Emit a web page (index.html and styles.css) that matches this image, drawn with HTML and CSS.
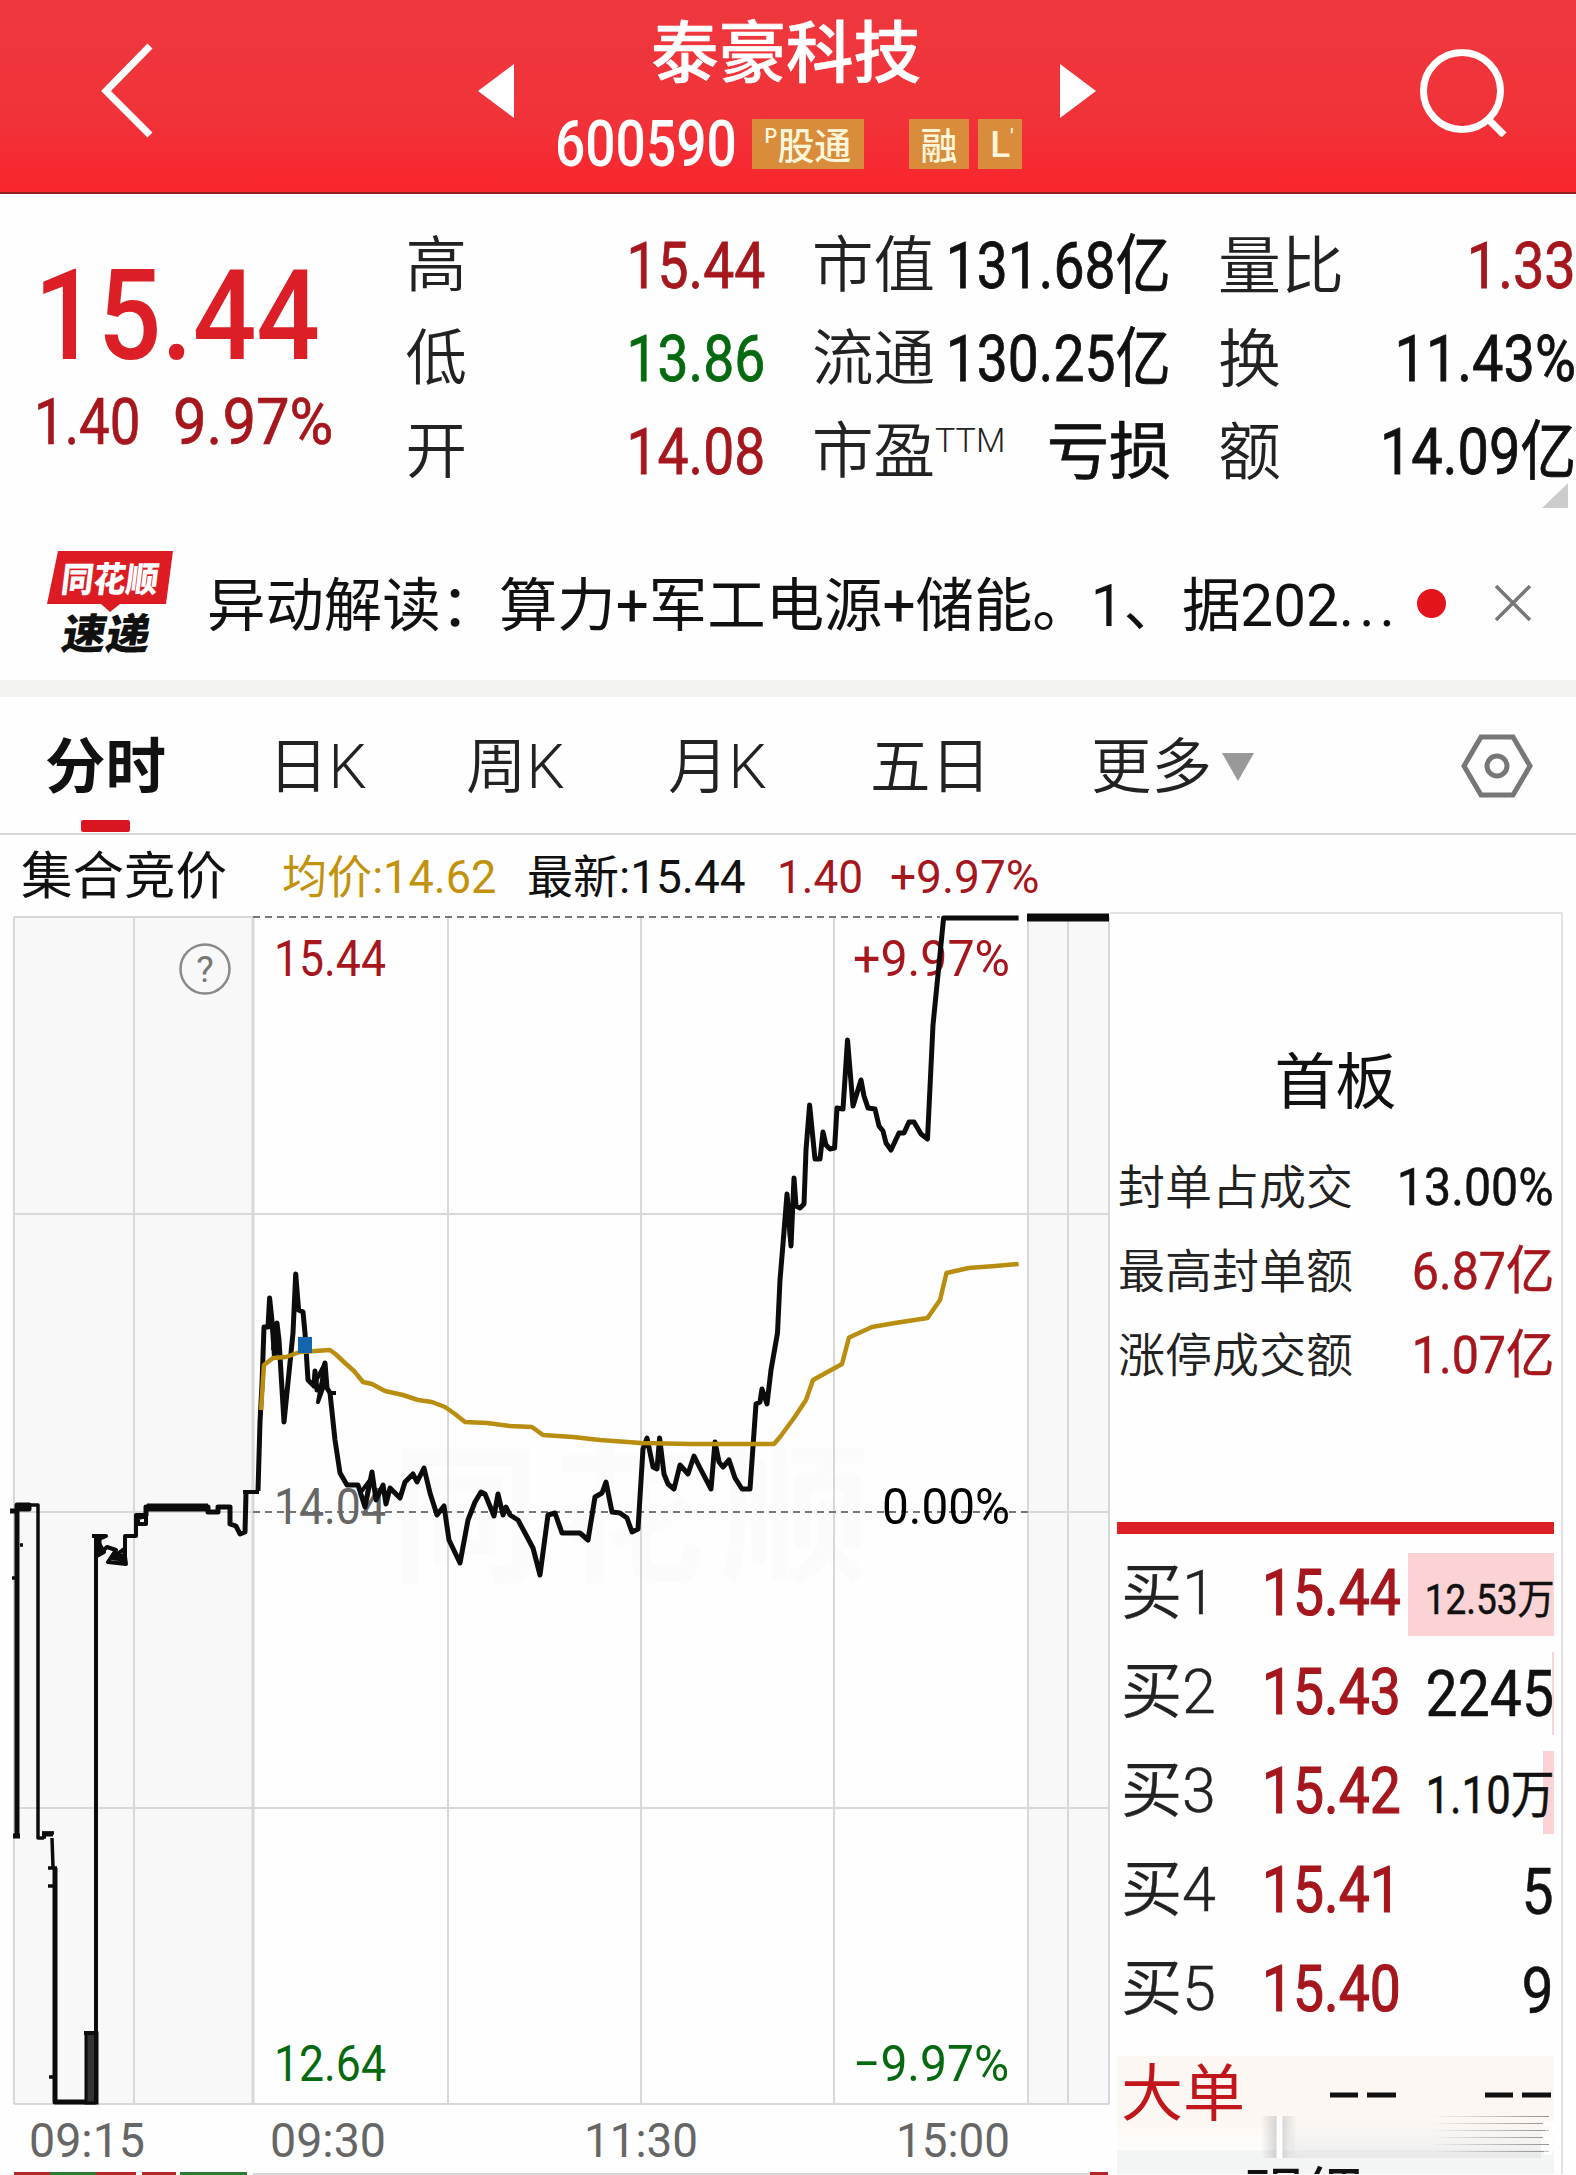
FILE: index.html
```html
<!DOCTYPE html>
<html lang="zh-CN">
<head>
    <meta charset="UTF-8">
    <meta name="viewport" content="width=device-width, initial-scale=1.0">
    <title>泰豪科技 600590</title>
    <link rel="stylesheet" href="styles.css">
</head>
<body>
    <header>
        <svg class="back" viewBox="0 0 60 100"><path d="M54 5 L10 50 L54 94"/></svg>
        <svg class="arrow prev" viewBox="0 0 37 54"><path d="M0 27 L36 0 V54 Z"/></svg>
        <div class="stock">
            <h1>泰豪科技</h1>
            <div class="code">
                <span class="number">600590</span>
                <span class="tag connect"><sup>P</sup>股通</span>
                <span class="tag margin">融</span>
                <span class="tag level">L<sup>'</sup></span>
            </div>
        </div>
        <svg class="arrow next" viewBox="0 0 37 54"><path d="M37 27 L1 0 V54 Z"/></svg>
        <svg class="search" viewBox="0 0 92 92"><circle cx="46" cy="46" r="38.5"/><path d="M72 74 L88 90"/></svg>
    </header>

    <section class="quote">
        <div class="price">
            <strong>15.44</strong>
            <p><span class="diff">1.40</span><span class="percent">9.97%</span></p>
        </div>
        <dl class="col-a">
            <div><dt>高</dt><dd class="up">15.44</dd></div>
            <div><dt>低</dt><dd class="down">13.86</dd></div>
            <div><dt>开</dt><dd class="up">14.08</dd></div>
        </dl>
        <dl class="col-b">
            <div><dt>市值</dt><dd>131.68亿</dd></div>
            <div><dt>流通</dt><dd>130.25亿</dd></div>
            <div><dt>市盈<sup>TTM</sup></dt><dd class="word">亏损</dd></div>
        </dl>
        <dl class="col-c">
            <div><dt>量比</dt><dd class="up">1.33</dd></div>
            <div><dt>换</dt><dd>11.43%</dd></div>
            <div><dt>额</dt><dd>14.09亿</dd></div>
        </dl>
        <svg class="corner" viewBox="0 0 26 25"><path d="M26 0 V25 H0 Z"/></svg>
    </section>

    <section class="news">
        <svg class="logo" viewBox="45 548 130 110">
            <path d="M58 551 H173 L166 604 H120 L110 612 L101 604 H47 Z"/>
            <text class="logo-top" transform="translate(60 592) skewX(-7)" textLength="97" lengthAdjust="spacingAndGlyphs">同花顺</text>
            <text class="logo-bottom" transform="translate(60 649) skewX(-10)" textLength="88" lengthAdjust="spacingAndGlyphs">速递</text>
        </svg>
        <p>异动解读：算力+军工电源+储能。1、据202<span>...</span></p>
        <i class="dot"></i>
        <svg class="close" viewBox="0 0 40 40"><path d="M3 3 L37 37 M37 3 L3 37"/></svg>
    </section>

    <nav>
        <a class="active">分时</a>
        <a>日K</a>
        <a>周K</a>
        <a>月K</a>
        <a>五日</a>
        <a class="more">更多<svg viewBox="0 0 32 28"><path d="M0 0 H32 L16 28 Z"/></svg></a>
        <svg class="settings" viewBox="0 0 76 68"><path d="M22 5 H54 L71 34 L54 63 H22 L5 34 Z"/><circle cx="38" cy="34" r="10"/></svg>
    </nav>

    <main>
        <div class="chart">
            <div class="info">
                <span class="auction">集合竞价</span>
                <span class="avg">均价:14.62</span>
                <span class="last">最新:15.44</span>
                <span class="up">1.40</span>
                <span class="up">+9.97%</span>
            </div>
            <svg class="plot" viewBox="0 905 1110 1270">
                <rect class="shade" x="14" y="917" width="239" height="1187"/>
                <rect class="shade" x="1028" y="917" width="81" height="1187"/>
                <text class="watermark" x="390" y="1570" textLength="480">同花顺</text>

                <path class="grid" d="M14 917 V2104 M134 917 V2104 M448 917 V2104 M641 917 V2104 M834 917 V2104 M1028 917 V2104 M1068 917 V2104 M1109 917 V2104"/>
                <path class="grid" d="M14 917 H253 M14 1214 H1109 M14 1512 H253 M1028 1512 H1109 M14 1808 H1109 M14 2104 H1109"/>
                <path class="grid open" d="M253 917 V2104"/>
                <path class="dashed" d="M253 917 H940 M253 1512 H1028"/>

                <circle class="help" cx="205" cy="969" r="24.5"/>
                <text class="help-mark" x="205" y="982">?</text>

                <g class="labels">
                    <text class="up" x="274" y="976" textLength="112" lengthAdjust="spacingAndGlyphs">15.44</text>
                    <text class="up" x="853" y="976" textLength="157" lengthAdjust="spacingAndGlyphs">+9.97%</text>
                    <text class="base" x="274" y="1524" textLength="112" lengthAdjust="spacingAndGlyphs">14.04</text>
                    <text x="882" y="1524" textLength="128" lengthAdjust="spacingAndGlyphs">0.00%</text>
                    <text class="down" x="274" y="2081" textLength="112" lengthAdjust="spacingAndGlyphs">12.64</text>
                    <text class="down" x="853" y="2081" textLength="156" lengthAdjust="spacingAndGlyphs">−9.97%</text>
                </g>
                <g class="times">
                    <text x="29" y="2157" textLength="116" lengthAdjust="spacingAndGlyphs">09:15</text>
                    <text x="270" y="2157" textLength="116" lengthAdjust="spacingAndGlyphs">09:30</text>
                    <text x="584" y="2157" textLength="114" lengthAdjust="spacingAndGlyphs">11:30</text>
                    <text x="896" y="2157" textLength="114" lengthAdjust="spacingAndGlyphs">15:00</text>
                </g>

                <!-- call auction -->
                <path class="line thick" d="M10 1511 H17 V1505 H29 V1509 H17 V1836 M13 1836 H20"/>
                <path class="line thin" d="M29 1505 H38 V1838 H44 M20 1545 H23 M12 1578 H16 M42 1833 H54 M42 1837 H46 M52 1838 L53 1867 M48 1868 H57 M48 1886 H56 M49 2077 H54"/>
                <path class="line thick" d="M42 1834 H53 M55 1868 V2102 H96"/>
                <rect class="block" x="86" y="2033" width="11" height="70"/>
                <path class="line" d="M84 2033 H96 M96 2102 V1536 M92 1536 H106 L97 1540 L104 1552 L97 1556 L107 1547 L116 1550 L108 1562 L126 1564 L124 1549 L112 1558 L125 1560 V1536 H136 V1515 H146 V1524 H138 V1518 L147 1516"/>
                <path class="line thick" d="M99 1539 V1552 M112 1556 H124"/>
                <path class="line limit" d="M147 1507.5 H208"/>
                <path class="line thick" d="M146 1516 V1507 H208 V1512 H218 V1507 H230 V1524 L236 1526 L240 1534 L245 1532 L246 1493"/>
                <path class="line" d="M243 1492 H259"/>

                <polyline class="line thick" points="258,1491 260,1422 262,1384 264,1327 268,1327 269.6,1298 272,1321 274.5,1357 277,1323 279,1340 284,1422 293,1333 295.7,1274 298.6,1310 303,1312 305,1333 308,1380 314,1386 315,1371 317,1390 322,1386 325,1363 327,1388 330,1393 335,1440 340,1473 347,1485 358,1485 365,1507 372,1472 376,1500 383,1485 386,1504 390,1488 400,1498 405,1482 413,1474 417,1482 424,1468 430,1493 437,1515 444,1506 449,1540 460,1563 468,1520 475,1502 481,1492 485,1494 494,1516 498,1494 503,1515 506,1507 510,1515 518,1520 525,1533 533,1548 540,1575 548,1515 555,1513 562,1533 580,1533 588,1540 595,1497 602,1493 606,1482 612,1512 620,1513 627,1518 632,1532 638,1529 643,1449 647,1438 653,1467 657,1469 659.6,1438 664,1474 668,1484 674,1489 680,1465 688,1474 694,1456 700,1468 711,1489 715,1442 719,1462 723,1467 729,1460 735,1478 742,1489 750,1489 756,1404 760,1402 762,1389 767,1404 771,1370 777.5,1333 780,1280 783,1244 787,1194 791,1246 794,1178 796,1206 800,1208 804,1204 806,1150 809.6,1105 815,1159 820,1159 823,1132 826,1145 830,1149 834.6,1148 837,1108 843,1109 847.5,1040 853,1106 861,1080 864,1096 868,1108 875,1109 879,1126 883,1131 886,1143 891,1150 899,1133 904,1133 909,1122 914,1122 921,1134 927.5,1139 933,1025 943.6,918 1018.6,918"/>
                <path class="line" d="M314 1385 L325 1363 L318 1402 L326 1380 M329 1393 H336 M365 1504 L370 1480 L361 1492 M273 1350 L276 1325 M788 1198 L790 1240 L793 1200"/>
                <path class="line limit" d="M1027 917.5 H1109"/>
                <polyline class="avg-line" points="261,1410 264,1365 273,1358 286,1357 300,1352 330,1350 336,1354.5 345,1363 354,1371 363,1382 372,1384 385,1391 403,1395 418,1400 432,1402 445,1407 455,1414 465,1422 487,1423 510,1426 532,1427 543,1435 573,1437 600,1440 641,1443 690,1444 774,1444 780,1437 794,1418 806,1400 813,1380 842,1364 849,1337.5 872,1327 895,1323 927.5,1318 940,1300 946.5,1273 968.6,1268 995,1266 1018.6,1264"/>
                <rect class="marker" x="298" y="1337" width="14" height="16"/>

                <!-- top edge of the volume pane -->
                <path class="grid" d="M253 2174 H1090"/>
                <path class="vol-up" d="M14 2173.5 H50 M96 2173.5 H136 M142 2173.5 H176 M1090 2173.5 H1108"/>
                <path class="vol-down" d="M50 2173.5 H96 M180 2173.5 H247"/>
            </svg>
        </div>

        <aside>
            <h2>首板</h2>
            <ul class="limit-up">
                <li><span>封单占成交</span><b>13.00%</b></li>
                <li><span>最高封单额</span><b class="up">6.87亿</b></li>
                <li><span>涨停成交额</span><b class="up">1.07亿</b></li>
            </ul>
            <hr>
            <ul class="book">
                <li><span>买1</span><b>15.44</b><em class="small" style="--depth: 146px"><i>12.53万</i></em></li>
                <li><span>买2</span><b>15.43</b><em style="--depth: 2px"><i>2245</i></em></li>
                <li><span>买3</span><b>15.42</b><em class="medium" style="--depth: 11px"><i>1.10万</i></em></li>
                <li><span>买4</span><b>15.41</b><em style="--depth: 0px"><i>5</i></em></li>
                <li><span>买5</span><b>15.40</b><em style="--depth: 0px"><i>9</i></em></li>
            </ul>
            <div class="big-order">
                <span>大单</span>
                <svg viewBox="0 0 66 6"><path d="M0 3 H28 M37 3 H66"/></svg>
                <svg viewBox="0 0 66 6"><path d="M0 3 H28 M37 3 H66"/></svg>
            </div>
            <div class="detail">明细</div>
            <svg class="smear" viewBox="0 0 300 46">
                <defs>
                    <linearGradient id="edge"><stop offset="0" stop-color="#999" stop-opacity="0"/><stop offset=".38" stop-color="#999" stop-opacity=".35"/><stop offset=".45" stop-color="#fff"/><stop offset=".58" stop-color="#fff"/><stop offset=".65" stop-color="#999" stop-opacity=".3"/><stop offset="1" stop-color="#999" stop-opacity="0"/></linearGradient>
                    <linearGradient id="down"><stop offset="0" stop-color="#fff" stop-opacity="0"/></linearGradient>
                    <linearGradient id="streak" gradientUnits="userSpaceOnUse" x1="170" x2="290"><stop offset="0" stop-color="#777" stop-opacity="0"/><stop offset="1" stop-color="#777" stop-opacity=".8"/></linearGradient>
                    <linearGradient id="fade" x2="0" y2="1"><stop offset="0" stop-color="#ddd" stop-opacity="0"/><stop offset="1" stop-color="#ddd" stop-opacity=".5"/></linearGradient>
                </defs>
                <rect x="0" y="4" width="36" height="42" fill="url(#edge)"/>
                <path d="M30 6 H280 V46 H30 Z" fill="url(#fade)"/>
                <path d="M150 4 H288 V5 H150 Z M150 11 H288 V12 H150 Z M150 18 H288 V19 H150 Z M150 25 H288 V26 H150 Z M150 32 H288 V33 H150 Z M150 39 H288 V40 H150 Z" fill="url(#streak)"/>
                <path d="M282 12 H292 V20 H284 M282 26 H290 V41 H283" fill="none" stroke="#fff" stroke-width="3"/>
            </svg>
        </aside>
    </main>
</body>
</html>
```
FILE: styles.css
```css
* {
    box-sizing: border-box;
    margin: 0;
    padding: 0;
}

body {
    width: 1576px;
    height: 2175px;
    overflow: hidden;
    background: #fefefe;
    color: #111;
    font-family: Roboto, "Noto Sans CJK SC", sans-serif;
}

ul {
    list-style: none;
}

em, i {
    font-style: normal;
}

.up {
    color: #a5161d;
    fill: #a5161d;
}

.down {
    color: #05690f;
    fill: #05690f;
}

header {
    display: flex;
    align-items: center;
    height: 194px;
    padding-bottom: 11px;
    background: linear-gradient(#ee383e, #f03339 60%, #fa252d);
    border-bottom: 2px solid #8f2023;

    svg {
        flex: none;
        fill: none;
        stroke: #fff;
        stroke-width: 7;
    }

    .back {
        width: 60px;
        height: 100px;
        margin-left: 96px;
    }

    .arrow {
        width: 37px;
        height: 54px;
        fill: #fff;
        stroke: none;
    }

    .prev {
        margin-left: 322px;
    }

    .next {
        margin-left: 34px;
    }

    .search {
        width: 92px;
        height: 92px;
        margin-left: 320px;
    }
}

.stock {
    align-self: flex-start;
    width: 470px;
    margin-left: 40px;
    padding-top: 14px;

    h1 {
        font-size: 67.5px;
        font-weight: 500;
        line-height: 80px;
        margin-left: 96px;
        color: #fff;
        white-space: nowrap;
        -webkit-text-stroke: .6px #fff;
    }

    .code {
        display: flex;
        align-items: center;
        height: 50px;
        margin-top: 25px;
        color: #fff;
    }

    .number {
        width: 197px;
        font-size: 65px;
        font-weight: 500;
        transform: scaleX(.82);
        transform-origin: left;
    }

    .tag {
        display: flex;
        justify-content: center;
        align-items: center;
        height: 50px;
        overflow: hidden;
        background: #d98c3c;
        color: #fff6da;
        font-size: 37px;
        font-weight: 500;

        sup {
            font-size: 20px;
            align-self: flex-start;
            line-height: 34px;
        }
    }

    .connect {
        width: 112px;
    }

    .margin {
        width: 60px;
        margin-left: 45px;
    }

    .level {
        width: 44px;
        margin-left: 9px;
        padding-left: 4px;
    }
}

.quote {
    position: relative;
    display: flex;
    height: 336px;
    overflow: hidden;

    .price {
        width: 406px;
        padding: 57px 0 0 34px;
        white-space: nowrap;
    }

    strong {
        display: block;
        font-size: 126px;
        font-weight: 500;
        line-height: 130px;
        color: #dc1f26;
        transform: scaleX(.89);
        transform-origin: left;
    }

    p {
        color: #a5161d;
        font-size: 65px;
        line-height: 80px;
        margin-top: 1px;
        display: flex;
        -webkit-text-stroke: .7px;
    }

    .diff {
        width: 139px;
        transform: scaleX(.84);
        transform-origin: left;
    }

    .percent {
        transform: scaleX(.92);
        transform-origin: left;
    }

    dl {
        padding-top: 26px;

        div {
            display: flex;
            justify-content: space-between;
            height: 93px;
            line-height: 93px;
            white-space: nowrap;
        }
    }

    dt {
        font-size: 61.5px;
        font-weight: 350;
        color: #222;
    }

    dd {
        margin-left: -60px;
        font-size: 65px;
        transform: scaleX(.85);
        transform-origin: right;
        -webkit-text-stroke: .8px;
    }

    sup {
        font-size: 34px;
        line-height: 0;
        vertical-align: 21px;
    }

    .word {
        font-size: 62px;
        font-weight: 400;
        transform: none;
    }

    .col-a {
        width: 362px;
        padding-left: 1px;
    }

    .col-b {
        flex: none;
        width: 359px;
        margin-left: 47px;
    }

    .col-c {
        flex: none;
        width: 358px;
        margin-left: 47px;

        dt {
            font-size: 63px;
        }

        dd {
            transform: scaleX(.86);
        }
    }

    .corner {
        position: absolute;
        right: 8px;
        bottom: 22px;
        width: 26px;
        height: 25px;
        fill: #ccc;
    }
}

.news {
    display: flex;
    align-items: center;
    height: 150px;
    padding-bottom: 4px;

    .logo {
        width: 130px;
        height: 110px;
        margin-left: 45px;
        fill: #dc1c22;
        font-weight: 900;
    }

    .logo-top {
        fill: #fff;
        font-size: 35px;
    }

    .logo-bottom {
        fill: #111;
        font-size: 42px;
    }

    p {
        width: 1242px;
        padding: 0 0 5px 32px;
        font-size: 58.4px;
        white-space: nowrap;
    }

    p span {
        letter-spacing: 5px;
    }

    .dot {
        width: 29px;
        height: 29px;
        border-radius: 50%;
        background: #e3141b;
    }

    .close {
        width: 40px;
        height: 40px;
        margin-left: 47px;
        fill: none;
        stroke: #777;
        stroke-width: 3.5;
    }
}

nav {
    display: flex;
    height: 155px;
    border-top: 17px solid #f3f3f2;
    border-bottom: 2px solid #d6d6d6;
    font-size: 60.5px;
    font-weight: 350;
    line-height: 142px;
    color: #222;

    a {
        position: relative;
        width: 202px;
        white-space: nowrap;
    }

    a:first-child {
        width: 268px;
        padding-left: 45px;
    }

    a:nth-child(2) {
        width: 198px;
    }

    a:nth-child(5) {
        width: 221px;
    }

    .active {
        font-weight: 700;
        color: #111;
    }

    .active::after {
        content: "";
        position: absolute;
        left: 81px;
        bottom: 1px;
        width: 49px;
        height: 12px;
        border-radius: 2px;
        background: #d9161f;
    }

    .more svg {
        width: 32px;
        height: 28px;
        margin-left: 10px;
        vertical-align: 7px;
        fill: #999;
    }

    .settings {
        width: 76px;
        height: 68px;
        margin: 35px 0 0 166px;
        fill: none;
        stroke: #777;
        stroke-width: 5;
    }
}

main {
    display: flex;
}

.chart {
    width: 1110px;
}

.info {
    display: flex;
    height: 70px;
    padding-left: 21px;
    font-size: 46px;
    line-height: 84px;
    white-space: nowrap;

    .auction {
        width: 261px;
        font-size: 51.5px;
    }

    .avg {
        width: 245px;
        color: #c3920c;
        transform: scaleX(.98);
        transform-origin: left;
    }

    .last {
        width: 250px;
    }

    .last + .up {
        width: 113px;
        transform: scaleX(.96);
        transform-origin: left;
    }
}

.plot {
    display: block;
    width: 1110px;
    height: 1270px;

    .shade {
        fill: #f8f8f8;
    }

    .watermark {
        fill: #fbfbfb;
        font-size: 150px;
        font-weight: 700;
    }

    .grid {
        fill: none;
        stroke: #d8d8d8;
        stroke-width: 2;
    }

    .open {
        stroke-width: 3;
    }

    .dashed {
        stroke: #777;
        stroke-width: 2;
        stroke-dasharray: 7 5;
    }

    .help {
        fill: none;
        stroke: #8a8a8a;
        stroke-width: 2.5;
    }

    .help-mark {
        font-size: 37px;
        text-anchor: middle;
        fill: #777;
    }

    .labels {
        font-size: 50px;
    }

    .base, .times {
        fill: #666;
    }

    .times {
        font-size: 48px;
    }

    .line {
        fill: none;
        stroke: #0c0c0c;
        stroke-width: 4;
        stroke-linejoin: round;
    }

    .thick {
        stroke-width: 5;
    }

    .thin {
        stroke-width: 3.5;
    }

    .limit {
        stroke-width: 8;
    }

    .block {
        fill: #333;
        stroke: #0c0c0c;
        stroke-width: 3;
    }

    .avg-line {
        fill: none;
        stroke: #b98d10;
        stroke-width: 4.5;
        stroke-linejoin: round;
    }

    .marker {
        fill: #1565ad;
    }

    .vol-up {
        stroke: #b3262b;
        stroke-width: 3;
    }

    .vol-down {
        stroke: #2c7a34;
        stroke-width: 3;
    }
}

aside {
    position: relative;
    width: 453px;
    height: 1262px;
    margin-top: 77px;
    padding: 128px 7px 0 7px;
    border-top: 2px solid #e2e2e2;
    border-right: 2px solid #e2e2e2;
    overflow: hidden;

    h2 {
        font-size: 61px;
        font-weight: 400;
        line-height: 82px;
        height: 80px;
        text-align: center;
    }

    hr {
        height: 12px;
        border: 0;
        background: #dc1f24;
    }
}

.limit-up {
    padding: 24px 0 124px;

    li {
        display: flex;
        justify-content: space-between;
        padding-left: 1px;
        height: 84px;
        line-height: 84px;
        font-size: 47px;
        font-weight: 350;
        color: #222;
    }

    b {
        font-size: 52px;
        font-weight: 400;
        transform: scaleX(.93);
        transform-origin: right;
        -webkit-text-stroke: .5px;
    }

    b:not(.up) {
        color: #111;
    }
}

.book {
    margin-top: 9px;

    li {
        display: grid;
        grid-template-columns: 145px 146px 146px;
        align-items: center;
        height: 99px;
        line-height: 84px;
        white-space: nowrap;
    }

    span {
        padding-left: 4px;
        font-size: 61px;
        font-weight: 350;
        color: #222;
        -webkit-text-stroke: .4px;
    }

    b {
        font-size: 65px;
        font-weight: 400;
        color: #a5161d;
        transform: scaleX(.85);
        transform-origin: left;
        -webkit-text-stroke: 1.2px;
    }

    em {
        height: 83px;
        margin-top: 3px;
        font-size: 65px;
        display: flex;
        justify-content: flex-end;
        background: linear-gradient(#fbd3d4, #fbd3d4) right / var(--depth) 100% no-repeat;
    }

    i {
        transform: scaleX(.88);
        transform-origin: right;
        -webkit-text-stroke: .5px;
    }

    .small {
        font-size: 42px;
        line-height: 94px;
    }

    .medium {
        font-size: 52px;
        line-height: 90px;

        i {
            transform: scaleX(.84);
        }
    }
}

.big-order {
    display: flex;
    align-items: center;
    height: 94px;
    margin-top: 18px;
    padding: 0 3px 17px 4px;
    background: linear-gradient(#fdf7f3 70%, #fefdfc);

    span {
        width: 209px;
        font-size: 62px;
        line-height: 76px;
        color: #c0161c;
    }

    svg {
        width: 66px;
        height: 6px;
        stroke: #111;
        stroke-width: 5;
    }

    svg + svg {
        margin-left: auto;
    }
}

.detail {
    height: 25px;
    padding-left: 126px;
    background: #f3f4f4;
    font-size: 60px;
    line-height: 94px;
}

.smear {
    position: absolute;
    right: 0;
    bottom: 16px;
    width: 300px;
    height: 46px;
}
```
